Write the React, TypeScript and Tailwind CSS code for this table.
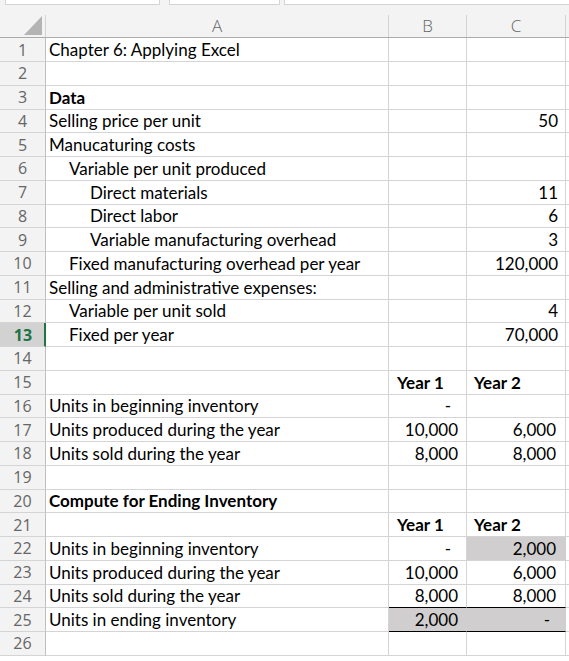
import React from "react";

type Row = {
  a?: string;
  indent?: 0 | 1 | 2;
  boldA?: boolean;
  b?: string;
  c?: string;
  bc?: "general" | "acct" | "head";
  fillB?: boolean;
  fillC?: boolean;
  blackBottomBC?: boolean;
  selected?: boolean;
};

const rows: Row[] = [
  { a: "Chapter 6: Applying Excel" },
  {},
  { a: "Data", boldA: true },
  { a: "Selling price per unit", c: "50", bc: "general" },
  { a: "Manucaturing costs" },
  { a: "Variable per unit produced", indent: 1 },
  { a: "Direct materials", indent: 2, c: "11", bc: "general" },
  { a: "Direct labor", indent: 2, c: "6", bc: "general" },
  { a: "Variable manufacturing overhead", indent: 2, c: "3", bc: "general" },
  { a: "Fixed manufacturing overhead per year", indent: 1, c: "120,000", bc: "general" },
  { a: "Selling and administrative expenses:" },
  { a: "Variable per unit sold", indent: 1, c: "4", bc: "general" },
  { a: "Fixed per year", indent: 1, c: "70,000", bc: "general", selected: true },
  {},
  { b: "Year 1", c: "Year 2", bc: "head" },
  { a: "Units in beginning inventory", b: "-", bc: "acct" },
  { a: "Units produced during the year", b: "10,000", c: "6,000", bc: "acct" },
  { a: "Units sold during the year", b: "8,000", c: "8,000", bc: "acct" },
  {},
  { a: "Compute for Ending Inventory", boldA: true },
  { b: "Year 1", c: "Year 2", bc: "head" },
  { a: "Units in beginning inventory", b: "-", c: "2,000", bc: "acct", fillC: true },
  { a: "Units produced during the year", b: "10,000", c: "6,000", bc: "acct" },
  { a: "Units sold during the year", b: "8,000", c: "8,000", bc: "acct", blackBottomBC: true },
  { a: "Units in ending inventory", b: "2,000", c: "-", bc: "acct", fillB: true, fillC: true, blackBottomBC: true },
  {},
];

const cellFont = { fontFamily: "Lato, 'Open Sans', sans-serif" };
const hdrFont = { fontFamily: "'Open Sans', 'Noto Sans', sans-serif" };

function NumCell({
  v,
  kind,
  col,
  fill,
  black,
}: {
  v?: string;
  kind?: Row["bc"];
  col: "b" | "c";
  fill?: boolean;
  black?: boolean;
}) {
  const width = col === "b" ? "w-[78px]" : "w-[99px]";
  const bg = fill ? "bg-[#d0cece]" : "bg-white";
  const br = fill ? "border-r-[#d0cece]" : "border-r-[#d4d4d4]";
  const bb = black ? "border-b-black" : "border-b-[#d4d4d4]";
  let content: React.ReactNode = null;
  let align = "justify-end";
  let pad = "";
  if (v) {
    if (kind === "head") {
      align = "justify-start";
      pad = col === "b" ? "pl-[8px]" : "pl-[7px]";
      content = <span className="font-bold">{v}</span>;
    } else if (v === "-") {
      pad = "pr-[15px]";
      content = <span>-</span>;
    } else if (kind === "acct") {
      pad = col === "b" ? "pr-[8px]" : "pr-[9px]";
      content = <span>{v}</span>;
    } else {
      pad = "pr-[7px]";
      content = <span>{v}</span>;
    }
  }
  return (
    <div
      className={`${width} shrink-0 h-full border-r border-b ${br} ${bb} ${bg} flex items-end ${align} ${pad} pb-[1px] text-[17px] leading-[21px] text-black whitespace-nowrap`}
      style={cellFont}
    >
      {content}
    </div>
  );
}

export default function App() {
  return (
    <div className="w-[569px] h-[661px] overflow-hidden bg-white relative">
      {/* top strip */}
      <div className="h-[15px] bg-[#f3f3f3] flex items-start">
        <div className="ml-[5px] w-[155px] h-[5px] bg-white border border-t-0 border-[#d4d4d4]" />
        <div className="ml-[9px] w-[111px] h-[5px] bg-white border border-t-0 border-[#d4d4d4]" />
        <div className="ml-[4px] flex-1 h-[5px] bg-white border border-t-0 border-r-0 border-[#d4d4d4]" />
      </div>
      {/* column header */}
      <div
        className="h-[23.25px] flex bg-[#f3f3f3] border-b border-[#ababab] text-[#666666]"
        style={hdrFont}
      >
        <div className="w-[46px] shrink-0 border-r border-[#d4d4d4] relative">
          <svg
            className="absolute left-[24px] top-[1px]"
            width="18"
            height="19"
            viewBox="0 0 18 19"
          >
            <polygon points="18,0 18,19 0,19" fill="#b4b4b4" />
          </svg>
        </div>
        <div className="w-[343px] shrink-0 border-r border-[#d4d4d4] flex items-center justify-center text-[17px] font-light">
          A
        </div>
        <div className="w-[78px] shrink-0 border-r border-[#d4d4d4] flex items-center justify-center text-[17px] font-light">
          B
        </div>
        <div className="w-[99px] shrink-0 border-r border-[#d4d4d4] flex items-center justify-center text-[17px] font-light">
          C
        </div>
        <div className="flex-1" />
      </div>
      {/* rows */}
      <div className="flex flex-col">
        {rows.map((r, i) => {
          const n = i + 1;
          const indentPad =
            r.indent === 2 ? "pl-[44px]" : r.indent === 1 ? "pl-[23px]" : "pl-[3px]";
          return (
            <div key={n} className="h-[23.75px] flex">
              <div
                className={`w-[46px] shrink-0 h-full border-b flex items-center justify-center text-[16px] ${
                  r.selected
                    ? "bg-[#d2d2d2] border-r-2 border-r-[#217346] text-[#217346] font-bold border-b-[#d4d4d4]"
                    : "bg-[#f3f3f3] border-r border-r-[#bfbfbf] text-[#666666] border-b-[#d4d4d4]"
                }`}
                style={hdrFont}
              >
                <span className={r.selected ? "pl-[2px]" : ""}>{n}</span>
              </div>
              <div
                className={`w-[343px] shrink-0 h-full border-r border-b border-[#d4d4d4] flex items-end ${indentPad} pb-[1px] text-[17px] leading-[21px] text-black whitespace-nowrap ${
                  r.boldA ? "font-bold" : ""
                }`}
                style={cellFont}
              >
                {r.a}
              </div>
              <NumCell
                v={r.b}
                kind={r.bc}
                col="b"
                fill={r.fillB}
                black={r.blackBottomBC}
              />
              <NumCell
                v={r.c}
                kind={r.bc}
                col="c"
                fill={r.fillC}
                black={r.blackBottomBC}
              />
              <div className="flex-1 h-full border-b border-[#d4d4d4]" />
            </div>
          );
        })}
      </div>
    </div>
  );
}
